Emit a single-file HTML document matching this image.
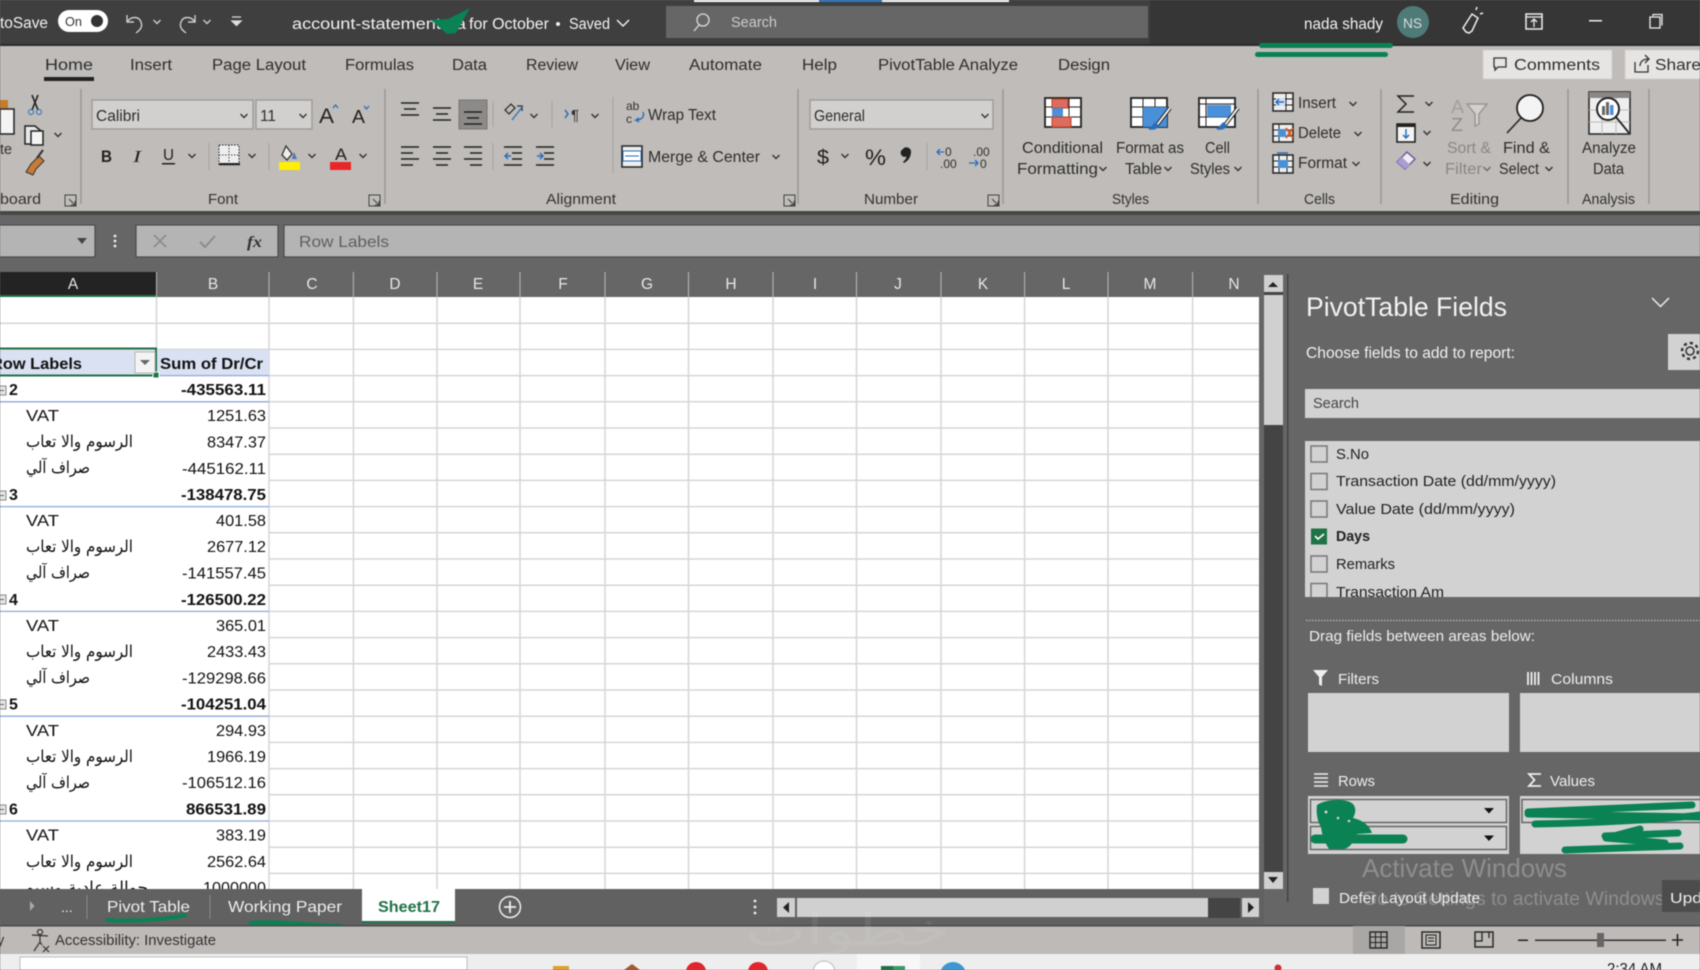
<!DOCTYPE html>
<html><head><meta charset="utf-8"><title>Excel PivotTable</title>
<style>
html,body{margin:0;padding:0;background:#666;width:1700px;height:970px;overflow:hidden}
svg{position:absolute;left:0;top:0;filter:blur(.4px)}
text{font-family:"Liberation Sans",sans-serif}
.w{fill:#f2f2f2;font-size:15.5px}
.t{fill:#2e2e2e;font-size:15.5px}
.g{fill:#8a8886;font-size:15.5px}
.l{fill:#333;font-size:14.5px}
.h{fill:#e6e6e6;font-size:15.5px;text-anchor:middle}
.n{fill:#111;font-size:16px;text-anchor:end}
.b{fill:#111;font-size:16px;font-weight:bold;text-anchor:end}
.k{fill:#111;font-size:16px}
.a{fill:#111;font-size:16.5px;font-family:"DejaVu Sans",sans-serif}
.f{fill:#222;font-size:15px}
.p{fill:#eee;font-size:15px}
.ln{stroke:#222;stroke-width:1.6;fill:none}
.gl{stroke:#d6d6d6;stroke-width:1.5}
.bl{stroke:#8ea9db;stroke-width:1.3}
.sep{stroke:#9a9896;stroke-width:1.5}
.cb{fill:#d2d2d2;stroke:#777;stroke-width:1.5}
.sc{stroke:#0a8254;fill:none;stroke-linecap:round;stroke-linejoin:round}
</style></head><body>
<svg width="1700" height="970" viewBox="0 0 1700 970" xmlns="http://www.w3.org/2000/svg">
<defs>
<path id="c" d="M-3.5-2L0 1.5L3.5-2" fill="none" stroke="#333" stroke-width="1.4"/>
<clipPath id="gc"><rect x="0" y="297" width="1259" height="592"/></clipPath>
<clipPath id="lst"><rect x="1305" y="441" width="395" height="156"/></clipPath>
</defs>

<!-- title bar -->
<rect width="1700" height="45" fill="#3f3f3f"/>
<rect x="1150" width="550" height="45" fill="#363636"/>
<rect x="0" y="44" width="1700" height="2" fill="#2c2c2c"/>
<rect x="694" y="0" width="125" height="2" fill="#fff"/><rect x="819" y="0" width="63" height="2" fill="#2a79c9"/><rect x="882" y="0" width="127" height="2" fill="#fff"/>
<text class="w" x="0" y="28" textLength="48" lengthAdjust="spacingAndGlyphs">toSave</text>
<rect x="58" y="10" width="50" height="22" rx="11" fill="#fff"/><circle cx="97" cy="21" r="6" fill="#333"/>
<text x="65" y="26" font-size="13" fill="#333" textLength="17" lengthAdjust="spacingAndGlyphs">On</text>
<path d="M127 15v7h7M127 22c4-6 12-6 14 0c2 5-1 8-5 11" fill="none" stroke="#ccc" stroke-width="1.4"/>
<use href="#c" x="157" y="22" style="filter:invert(1)"/>
<path d="M195 15v7h-7M195 22c-4-6-12-6-14 0c-2 5 1 8 5 11" fill="none" stroke="#ccc" stroke-width="1.4"/>
<use href="#c" x="207" y="22" style="filter:invert(1)"/>
<path d="M232 17h9M232 21l4.500 4.500l4.500-4.500z" fill="#ddd" stroke="#ddd" stroke-width="1.300"/>
<text class="w" x="292" y="29" textLength="174" lengthAdjust="spacingAndGlyphs">account-statement-sa</text>
<text class="w" x="469" y="29" textLength="80" lengthAdjust="spacingAndGlyphs">for October</text>
<circle cx="558" cy="24" r="2" fill="#eee"/>
<text class="w" x="569" y="29" textLength="41" lengthAdjust="spacingAndGlyphs">Saved</text>
<path d="M617 20l6 6l6-6" fill="none" stroke="#eee" stroke-width="1.500"/>
<path d="M431 20L448 19L470 8L456 33L447 34L439 27Z" fill="#0a8254"/>
<rect x="666" y="6" width="482" height="32" fill="#666"/>
<circle cx="703" cy="20" r="6" fill="none" stroke="#ddd" stroke-width="1.300"/><path d="M699 25l-5 6" stroke="#ddd" stroke-width="1.300"/>
<text x="731" y="27" font-size="15" fill="#ccc" textLength="46" lengthAdjust="spacingAndGlyphs">Search</text>
<text class="w" x="1304" y="29" textLength="79" lengthAdjust="spacingAndGlyphs">nada shady</text>
<circle cx="1413" cy="22" r="16" fill="#4e7b78"/>
<text x="1403" y="28" font-size="14" fill="#ddd" textLength="19" lengthAdjust="spacingAndGlyphs">NS</text>
<path d="M1466 32l-3-4l9-14l6 4l-6 13l-3 2z M1476 10l1-3M1480 14l3-1" fill="none" stroke="#eee" stroke-width="1.500"/>
<rect x="1526" y="14" width="16" height="15" fill="none" stroke="#eee" stroke-width="1.500"/><path d="M1526 17h16M1534 27v-7M1531 22l3-3l3 3" fill="none" stroke="#eee" stroke-width="1.300"/>
<rect x="1589" y="20" width="13" height="1.500" fill="#eee"/>
<rect x="1650" y="17" width="10" height="11" fill="none" stroke="#eee" stroke-width="1.300"/><path d="M1653 16v-1.500h9v11" fill="none" stroke="#eee" stroke-width="1.300"/>

<!-- ribbon -->
<rect x="0" y="46" width="1700" height="165" fill="#bfbcb9"/>
<text class="t" x="45" y="70" textLength="48" lengthAdjust="spacingAndGlyphs">Home</text>
<rect x="44" y="77" width="50" height="4" fill="#222"/>
<text class="t" x="130" y="70" textLength="42" lengthAdjust="spacingAndGlyphs">Insert</text>
<text class="t" x="212" y="70" textLength="94" lengthAdjust="spacingAndGlyphs">Page Layout</text>
<text class="t" x="345" y="70" textLength="69" lengthAdjust="spacingAndGlyphs">Formulas</text>
<text class="t" x="452" y="70" textLength="35" lengthAdjust="spacingAndGlyphs">Data</text>
<text class="t" x="526" y="70" textLength="52" lengthAdjust="spacingAndGlyphs">Review</text>
<text class="t" x="615" y="70" textLength="35" lengthAdjust="spacingAndGlyphs">View</text>
<text class="t" x="689" y="70" textLength="73" lengthAdjust="spacingAndGlyphs">Automate</text>
<text class="t" x="802" y="70" textLength="35" lengthAdjust="spacingAndGlyphs">Help</text>
<text class="t" x="878" y="70" textLength="140" lengthAdjust="spacingAndGlyphs">PivotTable Analyze</text>
<text class="t" x="1058" y="70" textLength="52" lengthAdjust="spacingAndGlyphs">Design</text>
<rect x="1483" y="50" width="129" height="29" fill="#e6e5e3" stroke="#cfcdca"/>
<path d="M1494 58h12v9h-8l-3 3v-3h-1z" fill="none" stroke="#333" stroke-width="1.300"/>
<text class="t" x="1514" y="70" textLength="86" lengthAdjust="spacingAndGlyphs">Comments</text>
<rect x="1625" y="50" width="80" height="29" fill="#e6e5e3" stroke="#cfcdca"/>
<path d="M1635 62v10h13v-7M1640 66c0-4 3-7 8-7M1645 55l4 4l-4 4" fill="none" stroke="#333" stroke-width="1.300"/>
<text class="t" x="1655" y="70" textLength="46" lengthAdjust="spacingAndGlyphs">Share</text>
<rect x="1259" y="43" width="134" height="5" rx="2.500" fill="#0a8254"/>
<rect x="1255" y="52" width="133" height="5" rx="2.500" fill="#0a8254"/>

<!-- separators -->
<path class="sep" d="M81 89v115M385 89v115M798 89v115M1003 89v115M1258 89v115M1381 89v115M1568 89v115M1649 89v115"/>
<path stroke="#a5a3a0" d="M209 143v27M269 143v27M493 101v26M493 143v27M552 101v26M613 97v76M927 143v27"/>
<!-- group labels -->
<text class="l" x="0" y="204" textLength="41" lengthAdjust="spacingAndGlyphs">board</text>
<text class="l" x="208" y="204" textLength="30" lengthAdjust="spacingAndGlyphs">Font</text>
<text class="l" x="546" y="204" textLength="70" lengthAdjust="spacingAndGlyphs">Alignment</text>
<text class="l" x="864" y="204" textLength="54" lengthAdjust="spacingAndGlyphs">Number</text>
<text class="l" x="1112" y="204" textLength="37" lengthAdjust="spacingAndGlyphs">Styles</text>
<text class="l" x="1304" y="204" textLength="31" lengthAdjust="spacingAndGlyphs">Cells</text>
<text class="l" x="1450" y="204" textLength="49" lengthAdjust="spacingAndGlyphs">Editing</text>
<text class="l" x="1582" y="204" textLength="53" lengthAdjust="spacingAndGlyphs">Analysis</text>
<path d="M65 195h11v11h-11zM69 199l6 6M75 201v4h-4" fill="none" stroke="#444"/>
<path d="M369 195h11v11h-11zM373 199l6 6M379 201v4h-4" fill="none" stroke="#444"/>
<path d="M784 195h11v11h-11zM788 199l6 6M794 201v4h-4" fill="none" stroke="#444"/>
<path d="M988 195h11v11h-11zM992 199l6 6M998 201v4h-4" fill="none" stroke="#444"/>

<!-- clipboard -->
<rect x="0" y="109" width="14" height="25" fill="#f3f3f3" stroke="#222" stroke-width="1.500"/><rect x="0" y="100" width="8" height="8" fill="#c77a28"/>
<text class="l" x="0" y="154" textLength="12" lengthAdjust="spacingAndGlyphs" font-size="15">te</text>
<path class="ln" d="M32 95l6 15M38 95l-6 15"/><circle cx="31" cy="112" r="2.500" fill="none" stroke="#2a6ebb"/><circle cx="39" cy="112" r="2.500" fill="none" stroke="#2a6ebb"/>
<path d="M25 126h10l6 5v13h-16z" fill="#e8e8e8" stroke="#222" stroke-width="1.500"/><path d="M31 131h12v14h-12z" fill="#f4f4f4" stroke="#222" stroke-width="1.500"/><use href="#c" x="58" y="135"/>
<path d="M31 164l8-8l5 5l-8 8l-3 6l-7-3z" fill="#c87b35" stroke="#333"/><path d="M37 158l6-8" stroke="#333" stroke-width="2"/>

<!-- font -->
<rect x="92" y="100" width="161" height="29" fill="#d2d0ce" stroke="#9f9d9b" stroke-width="1.500"/>
<text class="t" x="96" y="121" textLength="44" lengthAdjust="spacingAndGlyphs">Calibri</text><use href="#c" x="244" y="116"/>
<rect x="256" y="100" width="56" height="29" fill="#d2d0ce" stroke="#9f9d9b" stroke-width="1.500"/>
<text class="t" x="260" y="121" textLength="16" lengthAdjust="spacingAndGlyphs">11</text><use href="#c" x="303" y="116"/>
<text x="319" y="123" font-size="21" fill="#222" textLength="15" lengthAdjust="spacingAndGlyphs">A</text><path d="M333 108l2.500-3l2.500 3" fill="none" stroke="#2a6ebb" stroke-width="1.300"/>
<text x="352" y="123" font-size="18" fill="#222" textLength="13" lengthAdjust="spacingAndGlyphs">A</text><path d="M364 106l2.500 3l2.500-3" fill="none" stroke="#2a6ebb" stroke-width="1.300"/>
<text x="101" y="162" font-size="17" font-weight="bold" fill="#222" textLength="11" lengthAdjust="spacingAndGlyphs">B</text>
<text x="133" y="162" font-size="17" font-style="italic" fill="#222" textLength="8" lengthAdjust="spacingAndGlyphs" style="font-family:'Liberation Serif',serif">I</text>
<text x="163" y="160" font-size="16" fill="#222" textLength="11" lengthAdjust="spacingAndGlyphs">U</text><rect x="162" y="163" width="13" height="1.500" fill="#222"/><use href="#c" x="192" y="156"/>
<rect x="219" y="145" width="20" height="20" fill="#eee" stroke="#222" stroke-dasharray="1.500 1.500"/><path d="M229 145v20M219 155h20" stroke="#444" stroke-dasharray="1.500 1.500"/><rect x="219" y="163" width="21" height="2" fill="#222"/><use href="#c" x="252" y="156"/>
<path d="M286 146l6 8l-5 6l-5-5z" fill="#eee" stroke="#333" stroke-width="1.300"/><path d="M294 152l3 7h-5z" fill="#4a77b5"/><rect x="279" y="162" width="21" height="8" fill="#ffef00"/><use href="#c" x="312" y="156"/>
<text x="335" y="160" font-size="17" fill="#222" textLength="12" lengthAdjust="spacingAndGlyphs">A</text><rect x="330" y="162" width="21" height="8" fill="#e8262a"/><use href="#c" x="363" y="156"/>

<!-- alignment -->
<rect x="459" y="100" width="28" height="29" fill="#8d8b89" stroke="#777"/>
<path class="ln" stroke-width="2" d="M401 103h18M404 109h12M401 115h18M433 108h18M436 114h12M433 120h18M464 112h18M467 118h12M464 124h18"/>
<path class="ln" d="M401 147h18M401 153h12M401 159h18M401 165h12M433 147h18M436 153h12M433 159h18M436 165h12M464 147h18M470 153h12M464 159h18M470 165h12"/>
<path class="ln" d="M504 147h18M512 153h10M512 159h10M504 165h18M536 147h18M544 153h10M544 159h10M536 165h18"/>
<path d="M511 156h-6M508 153l-3 3l3 3M537 156h6M540 153l3 3l-3 3" fill="none" stroke="#2a6ebb" stroke-width="1.500"/>
<path d="M505 110l6-6l4 4l-6 6zM517 106h5v5" fill="none" stroke="#333" stroke-width="1.300"/><path d="M512 120l11-14" stroke="#2a6ebb" stroke-width="1.300"/><use href="#c" x="534" y="116"/>
<path d="M565 110l3 4l-3 4" fill="none" stroke="#2a6ebb" stroke-width="1.500"/><text x="571" y="120" font-size="15" fill="#333">¶</text><use href="#c" x="595" y="116"/>
<text x="626" y="110" font-size="12" fill="#333">ab</text><text x="626" y="123" font-size="12" fill="#333">c</text><path d="M643 112c2 5-2 8-7 8l3-2M639 122l-3-2" fill="none" stroke="#2a6ebb" stroke-width="1.400"/>
<text class="t" x="648" y="120" textLength="68" lengthAdjust="spacingAndGlyphs">Wrap Text</text>
<rect x="622" y="146" width="20" height="21" fill="#eee" stroke="#222" stroke-width="1.500"/><rect x="623" y="151" width="18" height="10" fill="#fff" stroke="#2a6ebb"/><path d="M625 156h14" stroke="#2a6ebb"/>
<text class="t" x="648" y="162" textLength="112" lengthAdjust="spacingAndGlyphs">Merge &amp; Center</text><use href="#c" x="776" y="157"/>

<!-- number -->
<rect x="810" y="100" width="183" height="29" fill="#d2d0ce" stroke="#9f9d9b" stroke-width="1.500"/>
<text class="t" x="814" y="121" textLength="51" lengthAdjust="spacingAndGlyphs">General</text><use href="#c" x="985" y="116"/>
<text x="817" y="164" font-size="20" fill="#222" textLength="12" lengthAdjust="spacingAndGlyphs">$</text><use href="#c" x="845" y="156"/>
<text x="865" y="165" font-size="22" fill="#222" textLength="21" lengthAdjust="spacingAndGlyphs">%</text>
<path d="M903 149a4.500 4.500 0 0 1 8 3c0 5-3 9-7 11l-1-1c2-2 3-3 3.500-5.500a4 4 0 0 1-3.500-7.500z" fill="#222"/>
<text x="945" y="156" font-size="12" fill="#333">0</text><text x="940" y="168" font-size="12" fill="#333">.00</text><path d="M944 152h-7M940 149l-3 3l3 3" fill="none" stroke="#2a6ebb" stroke-width="1.300"/>
<text x="973" y="156" font-size="12" fill="#333">.00</text><text x="980" y="168" font-size="12" fill="#333">0</text><path d="M969 163h9M975 160l3 3l-3 3" fill="none" stroke="#2a6ebb" stroke-width="1.300"/>

<!-- styles -->
<rect x="1045" y="98" width="36" height="29" fill="#fff" stroke="#222" stroke-width="1.800"/>
<path stroke="#222" d="M1057 98v29M1069 98v29M1045 107h36M1045 117h36"/>
<rect x="1052" y="99" width="16" height="9" fill="#dc6b60" stroke="#c0401f"/><rect x="1052" y="108" width="11" height="9" fill="#4a90d9"/><rect x="1052" y="117" width="19" height="10" fill="#dc6b60" stroke="#c0401f"/>
<rect x="1131" y="98" width="36" height="29" fill="#fff" stroke="#222" stroke-width="1.800"/>
<path stroke="#222" d="M1143 98v29M1155 98v29M1131 107h36M1131 117h36"/><rect x="1143" y="107" width="24" height="20" fill="#4a90d9"/>
<path d="M1170 108l-13 17" stroke="#222" stroke-width="4"/><path d="M1170 108l-13 17" stroke="#eee" stroke-width="2"/><path d="M1156 122c-3 1-4 5-8 7c4 2 10 0 11-3z" fill="#2a6ebb"/>
<rect x="1199" y="98" width="36" height="29" fill="#fff" stroke="#222" stroke-width="1.800"/>
<path stroke="#222" d="M1206 98v29M1199 117h36M1199 104h36"/><rect x="1207" y="105" width="24" height="12" fill="#4a90d9"/>
<path d="M1238 108l-13 17" stroke="#222" stroke-width="4"/><path d="M1238 108l-13 17" stroke="#eee" stroke-width="2"/><path d="M1224 122c-3 1-4 5-8 7c4 2 10 0 11-3z" fill="#2a6ebb"/>
<text class="t" x="1022" y="153" textLength="81" lengthAdjust="spacingAndGlyphs">Conditional</text>
<text class="t" x="1017" y="174" textLength="81" lengthAdjust="spacingAndGlyphs">Formatting</text><use href="#c" x="1103" y="169"/>
<text class="t" x="1116" y="153" textLength="68" lengthAdjust="spacingAndGlyphs">Format as</text>
<text class="t" x="1125" y="174" textLength="37" lengthAdjust="spacingAndGlyphs">Table</text><use href="#c" x="1168" y="169"/>
<text class="t" x="1205" y="153" textLength="25" lengthAdjust="spacingAndGlyphs">Cell</text>
<text class="t" x="1190" y="174" textLength="40" lengthAdjust="spacingAndGlyphs">Styles</text><use href="#c" x="1238" y="169"/>

<!-- cells -->
<rect x="1273" y="93" width="20" height="18" fill="#eee" stroke="#222" stroke-width="1.500"/><path stroke="#222" d="M1286 93v18M1273 99h20M1273 105h20"/><rect x="1276" y="98" width="9" height="8" fill="#cfe0f2"/><path d="M1284 102h-8M1279 99l-3 3l3 3" fill="none" stroke="#2a6ebb" stroke-width="1.500"/>
<text class="t" x="1298" y="108" textLength="38" lengthAdjust="spacingAndGlyphs">Insert</text><use href="#c" x="1353" y="104"/>
<rect x="1273" y="124" width="20" height="18" fill="#eee" stroke="#222" stroke-width="1.500"/><path stroke="#222" d="M1279 124v18M1273 130h20M1273 136h20"/><rect x="1278" y="129" width="8" height="8" fill="#4a90d9"/><path d="M1286 128l7 10M1293 128l-7 10" stroke="#d9531e" stroke-width="1.800"/>
<text class="t" x="1298" y="138" textLength="43" lengthAdjust="spacingAndGlyphs">Delete</text><use href="#c" x="1358" y="134"/>
<rect x="1273" y="155" width="20" height="18" fill="#eee" stroke="#222" stroke-width="1.500"/><path stroke="#222" d="M1273 161h20M1273 167h20M1279 155v18M1287 155v18"/><rect x="1278" y="160" width="10" height="8" fill="#4a90d9"/><path d="M1277 153h11" stroke="#2a6ebb" stroke-width="1.500"/>
<text class="t" x="1298" y="168" textLength="49" lengthAdjust="spacingAndGlyphs">Format</text><use href="#c" x="1356" y="164"/>

<!-- editing -->
<path d="M1414 96h-16l8 8l-8 8h16" fill="none" stroke="#222" stroke-width="1.500"/><use href="#c" x="1429" y="104"/>
<rect x="1397" y="124" width="18" height="18" fill="#f4f4f4" stroke="#222" stroke-width="1.600"/><rect x="1397" y="124" width="18" height="3" fill="#222"/><path d="M1406 129v9M1403 135l3 3l3-3" fill="none" stroke="#2a6ebb" stroke-width="1.500"/><use href="#c" x="1427" y="133"/>
<path d="M1397 162l10-10l8 7l-10 10z" fill="#eee" stroke="#6a5ea8" stroke-width="1.500"/><path d="M1397 162l5-5l8 8l-5 4z" fill="#a89fd0"/><use href="#c" x="1427" y="164"/>
<text x="1451" y="113" font-size="18" fill="#a3a19f" textLength="13" lengthAdjust="spacingAndGlyphs">A</text><text x="1451" y="131" font-size="18" fill="#8f8d8b" textLength="12" lengthAdjust="spacingAndGlyphs">Z</text>
<path d="M1467 104h20l-8 10v10l-4 2v-12z" fill="#d3d1cf" stroke="#9a9896" stroke-width="1.500"/>
<text class="g" x="1447" y="153" textLength="44" lengthAdjust="spacingAndGlyphs">Sort &amp;</text>
<text class="g" x="1445" y="174" textLength="37" lengthAdjust="spacingAndGlyphs">Filter</text><use href="#c" x="1487" y="169" opacity=".6"/>
<circle cx="1530" cy="108" r="13" fill="#f4f4f4" stroke="#222" stroke-width="1.800"/><path d="M1521 118l-14 15" stroke="#222" stroke-width="1.500"/>
<text class="t" x="1503" y="153" textLength="47" lengthAdjust="spacingAndGlyphs">Find &amp;</text>
<text class="t" x="1499" y="174" textLength="40" lengthAdjust="spacingAndGlyphs">Select</text><use href="#c" x="1549" y="169"/>

<!-- analysis -->
<rect x="1589" y="92" width="41" height="42" fill="#eee" stroke="#222" stroke-width="1.500"/><rect x="1589" y="92" width="41" height="6" fill="#8a8886"/>
<path stroke="#bbb" d="M1602 98v36M1616 98v36M1589 110h41M1589 122h41"/>
<circle cx="1608" cy="109" r="11" fill="#fff" stroke="#222" stroke-width="2"/><path d="M1616 117l13 16" stroke="#222" stroke-width="1.800"/>
<rect x="1602" y="106" width="3" height="9" fill="#666"/><rect x="1606" y="102" width="3" height="13" fill="#666"/><rect x="1610" y="105" width="3.500" height="10" fill="#4a90d9"/>
<text class="t" x="1582" y="153" textLength="54" lengthAdjust="spacingAndGlyphs">Analyze</text>
<text class="t" x="1593" y="174" textLength="31" lengthAdjust="spacingAndGlyphs">Data</text>

<!-- formula bar -->
<rect x="0" y="211" width="1700" height="61" fill="#666"/>
<rect x="0" y="211" width="1700" height="4" fill="#474747"/>
<rect x="-3" y="225" width="98" height="32" fill="#b4b4b4" stroke="#4a4a4a" stroke-width="1.200"/><path d="M77 238h10l-5 6z" fill="#444"/>
<circle cx="115" cy="236" r="1.400" fill="#eee"/><circle cx="115" cy="241" r="1.400" fill="#eee"/><circle cx="115" cy="246" r="1.400" fill="#eee"/>
<rect x="136" y="225" width="142" height="32" fill="#b4b4b4" stroke="#4a4a4a" stroke-width="1.200"/>
<path d="M154 235l12 12M166 235l-12 12" stroke="#8d8d8d" stroke-width="1.800"/><path d="M200 242l5 5l10-11" fill="none" stroke="#8d8d8d" stroke-width="2"/>
<text x="247" y="247" font-size="16" font-style="italic" font-weight="bold" fill="#333" textLength="15" lengthAdjust="spacingAndGlyphs" style="font-family:'Liberation Serif',serif">fx</text>
<rect x="284" y="225" width="1420" height="32" fill="#b4b4b4" stroke="#4a4a4a" stroke-width="1.200"/>
<text x="299" y="247" font-size="16" fill="#5f5f5f" textLength="90" lengthAdjust="spacingAndGlyphs">Row Labels</text>

<!-- column headers -->
<rect x="0" y="272" width="1260" height="25" fill="#666"/>
<rect x="0" y="272" width="156" height="25" fill="#232323"/>
<rect x="0" y="295" width="156" height="2" fill="#1f7346"/>
<path stroke="#b9b9b9" d="M156.500 272v25M269 272v25M353.400 272v25M437 272v25M520 272v25M605 272v25M688.500 272v25M773 272v25M856.500 272v25M941 272v25M1024.600 272v25M1108 272v25M1192.600 272v25"/>
<text class="h" x="73" y="289">A</text><text class="h" x="213" y="289">B</text><text class="h" x="312" y="289">C</text><text class="h" x="395" y="289">D</text><text class="h" x="478" y="289">E</text><text class="h" x="563" y="289">F</text><text class="h" x="647" y="289">G</text><text class="h" x="731" y="289">H</text><text class="h" x="815" y="289">I</text><text class="h" x="898" y="289">J</text><text class="h" x="983" y="289">K</text><text class="h" x="1066" y="289">L</text><text class="h" x="1150" y="289">M</text><text class="h" x="1234" y="289">N</text>

<!-- grid -->
<rect x="0" y="297" width="1259" height="592" fill="#fff"/>
<path class="gl" d="M0 323.200h269M0 349.400h269M156.500 297v52M269 297v592M353.400 297v592M437 297v592M520 297v592M605 297v592M688.500 297v592M773 297v592M856.500 297v592M941 297v592M1024.600 297v592M1108 297v592M1192.600 297v592"/>
<path class="gl" d="M269 323.200h990M269 349.400h990M269 375.600h990M269 401.800h990M269 428h990M269 454.200h990M269 480.400h990M269 506.600h990M269 532.800h990M269 559h990M269 585.200h990M269 611.400h990M269 637.600h990M269 663.800h990M269 690h990M269 716.200h990M269 742.400h990M269 768.600h990M269 794.800h990M269 821h990M269 847.200h990M269 873.400h990"/>
<rect x="0" y="350" width="269" height="26" fill="#d9e1f2"/>
<path class="bl" d="M0 375.600h269M0 401.800h269M0 506.600h269M0 611.400h269M0 716.200h269M0 821h269"/>
<rect x="-2" y="348.500" width="158" height="27" fill="none" stroke="#1f7346" stroke-width="2"/>
<rect x="153" y="372" width="6" height="6" fill="#1f7346" stroke="#fff"/>
<rect x="135" y="352" width="20" height="21" fill="#f4f4f4" stroke="#b5b5b5"/><path d="M140 360h10l-5 5z" fill="#666"/>
<text class="k" x="-9" y="369" font-weight="bold" textLength="91" lengthAdjust="spacingAndGlyphs">Row Labels</text>
<text class="k" x="160" y="369" font-weight="bold" textLength="103" lengthAdjust="spacingAndGlyphs">Sum of Dr/Cr</text>

<g clip-path="url(#gc)"><g transform="translate(0,1)">
<g fill="#e6e6e6" stroke="#888"><rect x="-3" y="385" width="9" height="9"/><rect x="-3" y="490" width="9" height="9"/><rect x="-3" y="594" width="9" height="9"/><rect x="-3" y="699" width="9" height="9"/><rect x="-3" y="804" width="9" height="9"/></g>
<path stroke="#666" d="M-1 389.500h5M-1 494.500h5M-1 598.500h5M-1 703.500h5M-1 808.500h5"/>
<text class="k" x="9" y="394" font-weight="bold">2</text><text class="b" x="266" y="394" textLength="85" lengthAdjust="spacingAndGlyphs">-435563.11</text>
<text class="k" x="26" y="420" textLength="33" lengthAdjust="spacingAndGlyphs">VAT</text><text class="n" x="266" y="420" textLength="59" lengthAdjust="spacingAndGlyphs">1251.63</text>
<text class="a" x="26" y="446" textLength="107" lengthAdjust="spacingAndGlyphs">الرسوم والا تعاب</text><text class="n" x="266" y="446.500" textLength="59" lengthAdjust="spacingAndGlyphs">8347.37</text>
<text class="a" x="26" y="472" textLength="64" lengthAdjust="spacingAndGlyphs">صراف آلي</text><text class="n" x="266" y="473" textLength="84" lengthAdjust="spacingAndGlyphs">-445162.11</text>

<text class="k" x="9" y="499" font-weight="bold">3</text><text class="b" x="266" y="499" textLength="85" lengthAdjust="spacingAndGlyphs">-138478.75</text>
<text class="k" x="26" y="525" textLength="33" lengthAdjust="spacingAndGlyphs">VAT</text><text class="n" x="266" y="525" textLength="50" lengthAdjust="spacingAndGlyphs">401.58</text>
<text class="a" x="26" y="551" textLength="107" lengthAdjust="spacingAndGlyphs">الرسوم والا تعاب</text><text class="n" x="266" y="551" textLength="59" lengthAdjust="spacingAndGlyphs">2677.12</text>
<text class="a" x="26" y="577" textLength="64" lengthAdjust="spacingAndGlyphs">صراف آلي</text><text class="n" x="266" y="577.500" textLength="84" lengthAdjust="spacingAndGlyphs">-141557.45</text>

<text class="k" x="9" y="604" font-weight="bold">4</text><text class="b" x="266" y="604" textLength="85" lengthAdjust="spacingAndGlyphs">-126500.22</text>
<text class="k" x="26" y="630" textLength="33" lengthAdjust="spacingAndGlyphs">VAT</text><text class="n" x="266" y="630" textLength="50" lengthAdjust="spacingAndGlyphs">365.01</text>
<text class="a" x="26" y="656" textLength="107" lengthAdjust="spacingAndGlyphs">الرسوم والا تعاب</text><text class="n" x="266" y="656" textLength="59" lengthAdjust="spacingAndGlyphs">2433.43</text>
<text class="a" x="26" y="682" textLength="64" lengthAdjust="spacingAndGlyphs">صراف آلي</text><text class="n" x="266" y="682.500" textLength="84" lengthAdjust="spacingAndGlyphs">-129298.66</text>

<text class="k" x="9" y="708.500" font-weight="bold">5</text><text class="b" x="266" y="708.500" textLength="85" lengthAdjust="spacingAndGlyphs">-104251.04</text>
<text class="k" x="26" y="735" textLength="33" lengthAdjust="spacingAndGlyphs">VAT</text><text class="n" x="266" y="735" textLength="50" lengthAdjust="spacingAndGlyphs">294.93</text>
<text class="a" x="26" y="761" textLength="107" lengthAdjust="spacingAndGlyphs">الرسوم والا تعاب</text><text class="n" x="266" y="761" textLength="59" lengthAdjust="spacingAndGlyphs">1966.19</text>
<text class="a" x="26" y="787" textLength="64" lengthAdjust="spacingAndGlyphs">صراف آلي</text><text class="n" x="266" y="787" textLength="84" lengthAdjust="spacingAndGlyphs">-106512.16</text>

<text class="k" x="9" y="813.500" font-weight="bold">6</text><text class="b" x="266" y="813.500" textLength="80" lengthAdjust="spacingAndGlyphs">866531.89</text>
<text class="k" x="26" y="839.500" textLength="33" lengthAdjust="spacingAndGlyphs">VAT</text><text class="n" x="266" y="839.500" textLength="50" lengthAdjust="spacingAndGlyphs">383.19</text>
<text class="a" x="26" y="866" textLength="107" lengthAdjust="spacingAndGlyphs">الرسوم والا تعاب</text><text class="n" x="266" y="866" textLength="59" lengthAdjust="spacingAndGlyphs">2562.64</text>
<text class="a" x="26" y="892" textLength="122" lengthAdjust="spacingAndGlyphs">حوالة عادية وسيو</text><text class="n" x="266" y="892" textLength="63" lengthAdjust="spacingAndGlyphs">1000000</text>
</g></g>

<!-- right side panel -->
<rect x="1259" y="272" width="441" height="654" fill="#666"/>
<rect x="1264" y="275" width="19" height="614" fill="#444"/>
<rect x="1264" y="275" width="19" height="17" fill="#d0d0d0"/><path d="M1268 287h10l-5-5z" fill="#222"/>
<rect x="1264" y="295" width="19" height="130" fill="#d0d0d0"/>
<rect x="1264" y="872" width="19" height="17" fill="#d0d0d0"/><path d="M1268 877h10l-5 6z" fill="#222"/>
<rect x="1287" y="274" width="1.500" height="628" fill="#444"/>

<text x="1306" y="316" font-size="27" fill="#f2f2f2" textLength="201" lengthAdjust="spacingAndGlyphs">PivotTable Fields</text>
<path d="M1652 298l8.500 8.500l8.500-8.500" fill="none" stroke="#eee" stroke-width="1.500"/>
<text x="1306" y="358" font-size="15.500" fill="#f0f0f0" textLength="209" lengthAdjust="spacingAndGlyphs">Choose fields to add to report:</text>
<rect x="1668" y="334" width="34" height="36" fill="#d2d2d2"/>
<circle cx="1690" cy="351" r="4" fill="none" stroke="#333" stroke-width="1.500"/><circle cx="1690" cy="351" r="8" fill="none" stroke="#333" stroke-width="2.400" stroke-dasharray="3.200 3"/>
<rect x="1305" y="389" width="396" height="29" fill="#d2d2d2"/>
<text x="1313" y="408" font-size="15" fill="#444" textLength="46" lengthAdjust="spacingAndGlyphs">Search</text>
<rect x="1305" y="441" width="396" height="156" fill="#d2d2d2"/>
<g clip-path="url(#lst)">
<rect class="cb" x="1311" y="446" width="16" height="16"/><rect class="cb" x="1311" y="473.500" width="16" height="16"/><rect class="cb" x="1311" y="501" width="16" height="16"/>
<rect x="1311" y="528.500" width="16" height="16" fill="#1f7346"/><path d="M1315 536l3 3l6-5" fill="none" stroke="#fff" stroke-width="1.700"/>
<rect class="cb" x="1311" y="556" width="16" height="16"/><rect class="cb" x="1311" y="583.500" width="16" height="16"/>
<text class="f" x="1336" y="459" textLength="33" lengthAdjust="spacingAndGlyphs">S.No</text>
<text class="f" x="1336" y="486" textLength="220" lengthAdjust="spacingAndGlyphs">Transaction Date (dd/mm/yyyy)</text>
<text class="f" x="1336" y="514" textLength="179" lengthAdjust="spacingAndGlyphs">Value Date (dd/mm/yyyy)</text>
<text class="f" x="1336" y="541" font-weight="bold" textLength="34" lengthAdjust="spacingAndGlyphs">Days</text>
<text class="f" x="1336" y="569" textLength="59" lengthAdjust="spacingAndGlyphs">Remarks</text>
<text class="f" x="1336" y="597" textLength="108" lengthAdjust="spacingAndGlyphs">Transaction Am</text>
</g>
<path d="M1306 620.500h394" stroke="#bbb" stroke-width="1.200" stroke-dasharray="1.500 1.500"/>
<text class="p" x="1309" y="641" textLength="226" lengthAdjust="spacingAndGlyphs">Drag fields between areas below:</text>
<path d="M1313 670h15l-6 7v9l-3-1.500v-7.500z" fill="#eee"/>
<text class="p" x="1338" y="684" textLength="41" lengthAdjust="spacingAndGlyphs">Filters</text>
<path stroke="#eee" stroke-width="1.800" d="M1528 672v13M1531.500 672v13M1535 672v13M1538.500 672v13"/>
<text class="p" x="1551" y="684" textLength="62" lengthAdjust="spacingAndGlyphs">Columns</text>
<rect x="1308" y="693" width="201" height="59" fill="#d2d2d2"/>
<rect x="1520" y="693" width="185" height="59" fill="#d2d2d2"/>
<path stroke="#eee" stroke-width="1.500" d="M1314 774h14M1314 778h14M1314 782h14M1314 786h14"/>
<text class="p" x="1338" y="786" textLength="37" lengthAdjust="spacingAndGlyphs">Rows</text>
<path d="M1541 774h-12l5.500 6l-5.500 6h12" fill="none" stroke="#eee" stroke-width="1.800"/>
<text class="p" x="1550" y="786" textLength="45" lengthAdjust="spacingAndGlyphs">Values</text>
<rect x="1308" y="796" width="201" height="58" fill="#d2d2d2"/>
<rect x="1520" y="796" width="185" height="58" fill="#d2d2d2"/>
<rect x="1310.500" y="799.500" width="196" height="23" fill="#d2d2d2" stroke="#666" stroke-width="1.500"/>
<rect x="1310.500" y="826.500" width="196" height="23" fill="#d2d2d2" stroke="#666" stroke-width="1.500"/>
<path d="M1484 808h10l-5 5.500zM1484 835.500h10l-5 5.500z" fill="#111"/>
<rect x="1522" y="799.500" width="185" height="23" fill="#d2d2d2" stroke="#666" stroke-width="1.500"/>
<!-- scribbles -->
<path d="M1317 805c8-6 30-7 36-1c4 5 2 10 0 14c8 2 16 6 19 15l-15 1c-3 8-8 15-14 15h-14c-4-6-7-14-8-22c-4-6-5-16-4-22z" style="fill:#0a8254"/>
<circle cx="1326" cy="812" r="1.500" fill="#d2d2d2"/><circle cx="1338" cy="818" r="1.300" fill="#d2d2d2"/><circle cx="1349" cy="821" r="1.300" fill="#d2d2d2"/>
<path class="sc" stroke-width="9" d="M1315 839h88"/>
<path class="sc" stroke-width="7" d="M1528 812L1692 805M1528 814L1700 817M1535 824C1600 823 1680 818 1700 815M1605 836L1678 833M1640 829L1606 838L1665 843M1565 850L1680 846"/>

<!-- activate windows -->
<text x="1362" y="877" font-size="26" fill="#8e8e8e" textLength="205" lengthAdjust="spacingAndGlyphs">Activate Windows</text>
<text x="1362" y="905" font-size="19" fill="#8e8e8e" textLength="308" lengthAdjust="spacingAndGlyphs">Go to Settings to activate Windows.</text>
<rect x="1662" y="880" width="40" height="32" fill="#4c4c4c"/>
<rect x="1313" y="888" width="16" height="16" fill="#d2d2d2"/>
<text class="p" x="1339" y="903" textLength="141" lengthAdjust="spacingAndGlyphs">Defer Layout Update</text>
<text class="p" x="1670" y="903" textLength="32" lengthAdjust="spacingAndGlyphs">Upd</text>

<!-- sheet tabs -->
<rect x="0" y="889" width="1264" height="37" fill="#616161"/>
<path d="M30 901l4.500 5l-4.500 5" fill="#aaa"/>
<text x="61" y="912" font-size="14" fill="#eee">...</text>
<path stroke="#8a8a8a" d="M87 895v24M210 895v24"/>
<text x="107" y="912" font-size="16" fill="#eee" textLength="83" lengthAdjust="spacingAndGlyphs">Pivot Table</text>
<text x="228" y="912" font-size="16" fill="#eee" textLength="114" lengthAdjust="spacingAndGlyphs">Working Paper</text>
<rect x="362" y="889" width="93" height="33" fill="#fff"/><rect x="362" y="921" width="93" height="2" fill="#1f7346"/>
<text x="378" y="912" font-size="16" font-weight="bold" fill="#1f7346" textLength="62" lengthAdjust="spacingAndGlyphs">Sheet17</text>
<circle cx="510" cy="907" r="10.500" fill="none" stroke="#eee" stroke-width="1.500"/><path d="M504 907h12M510 901v12" stroke="#eee" stroke-width="1.800"/>
<circle cx="755" cy="901" r="1.400" fill="#eee"/><circle cx="755" cy="907" r="1.400" fill="#eee"/><circle cx="755" cy="913" r="1.400" fill="#eee"/>
<rect x="777" y="898" width="18" height="19" fill="#d0d0d0"/><path d="M789 902l-6 5.500l6 5.500z" fill="#222"/>
<rect x="797" y="898" width="411" height="19" fill="#d0d0d0"/>
<rect x="1208" y="898" width="32" height="20" fill="#444"/>
<rect x="1242" y="898" width="17" height="19" fill="#d0d0d0"/><path d="M1248 902l6 5.500l-6 5.500z" fill="#222"/>
<path class="sc" stroke-width="4" d="M107 920c30 2 60-1 78-5"/>
<path class="sc" stroke-width="4.500" d="M251 923c30-2 60 3 90 3"/>

<!-- status bar -->
<rect x="0" y="926" width="1700" height="28" fill="#bdbab7"/>
<rect x="0" y="925" width="1700" height="1.500" fill="#4a4a4a"/>
<text x="-3" y="945" font-size="14.500" fill="#333">y</text>
<circle cx="40" cy="932" r="2.500" fill="none" stroke="#333" stroke-width="1.200"/>
<path d="M32 935l16 1M40 936v6l-6 9M40 942l2 3M43 946l6 6M49 946l-6 6" fill="none" stroke="#333" stroke-width="1.200"/>
<text class="l" x="55" y="945" textLength="161" lengthAdjust="spacingAndGlyphs">Accessibility: Investigate</text>
<rect x="1353" y="926" width="52" height="28" fill="#a9a7a5"/>
<rect x="1370" y="932" width="17" height="16" fill="none" stroke="#222" stroke-width="1.400"/><path stroke="#222" d="M1375.500 932v16M1381 932v16M1370 937h17M1370 942.500h17"/>
<rect x="1422" y="932" width="18" height="16" fill="none" stroke="#222" stroke-width="1.400"/><rect x="1426" y="935" width="10" height="10" fill="none" stroke="#222"/><path stroke="#222" d="M1428 938h6M1428 941h6"/>
<rect x="1475" y="932" width="18" height="15" fill="none" stroke="#222" stroke-width="1.400"/><path d="M1482 932v9h-7M1489 932v6" fill="none" stroke="#222" stroke-width="1.300"/>
<rect x="1518" y="939.500" width="10" height="1.500" fill="#222"/>
<rect x="1535" y="939.500" width="131" height="1.500" fill="#333"/>
<rect x="1597" y="933" width="7" height="14" fill="#666"/>
<path stroke="#222" stroke-width="1.500" d="M1672 940h11M1677.500 934v12"/>
<!-- watermark -->
<text x="745" y="945" font-size="44" fill="#fff" opacity=".07" textLength="205" lengthAdjust="spacingAndGlyphs" style="font-family:'DejaVu Sans',sans-serif">خطوات</text>

<!-- taskbar -->
<rect x="0" y="954" width="1700" height="16" fill="#eeeeee"/>
<rect x="20" y="957" width="447" height="13" fill="#fff" stroke="#999" stroke-width=".6"/>
<rect x="553" y="966" width="16" height="4" fill="#e0a030"/>
<path d="M624 970l8-6l8 6z" fill="#a05a2c"/>
<circle cx="696" cy="972" r="10" fill="#e0262a"/><circle cx="758" cy="972" r="10" fill="#e0262a"/>
<circle cx="824" cy="972" r="11" fill="#fff" stroke="#bbb"/>
<rect x="857" y="954" width="63" height="16" fill="#f7f7f7"/>
<rect x="881" y="966" width="24" height="4" fill="#3a9a6a"/><rect x="881" y="966" width="12" height="4" fill="#1f7346"/>
<circle cx="953" cy="975" r="13" fill="#3d97d3"/>
<circle cx="1278" cy="968" r="3.500" fill="#d03030"/>
<text x="1607" y="974" font-size="16" fill="#222" textLength="55" lengthAdjust="spacingAndGlyphs">2:34 AM</text>
</svg>
</body></html>
